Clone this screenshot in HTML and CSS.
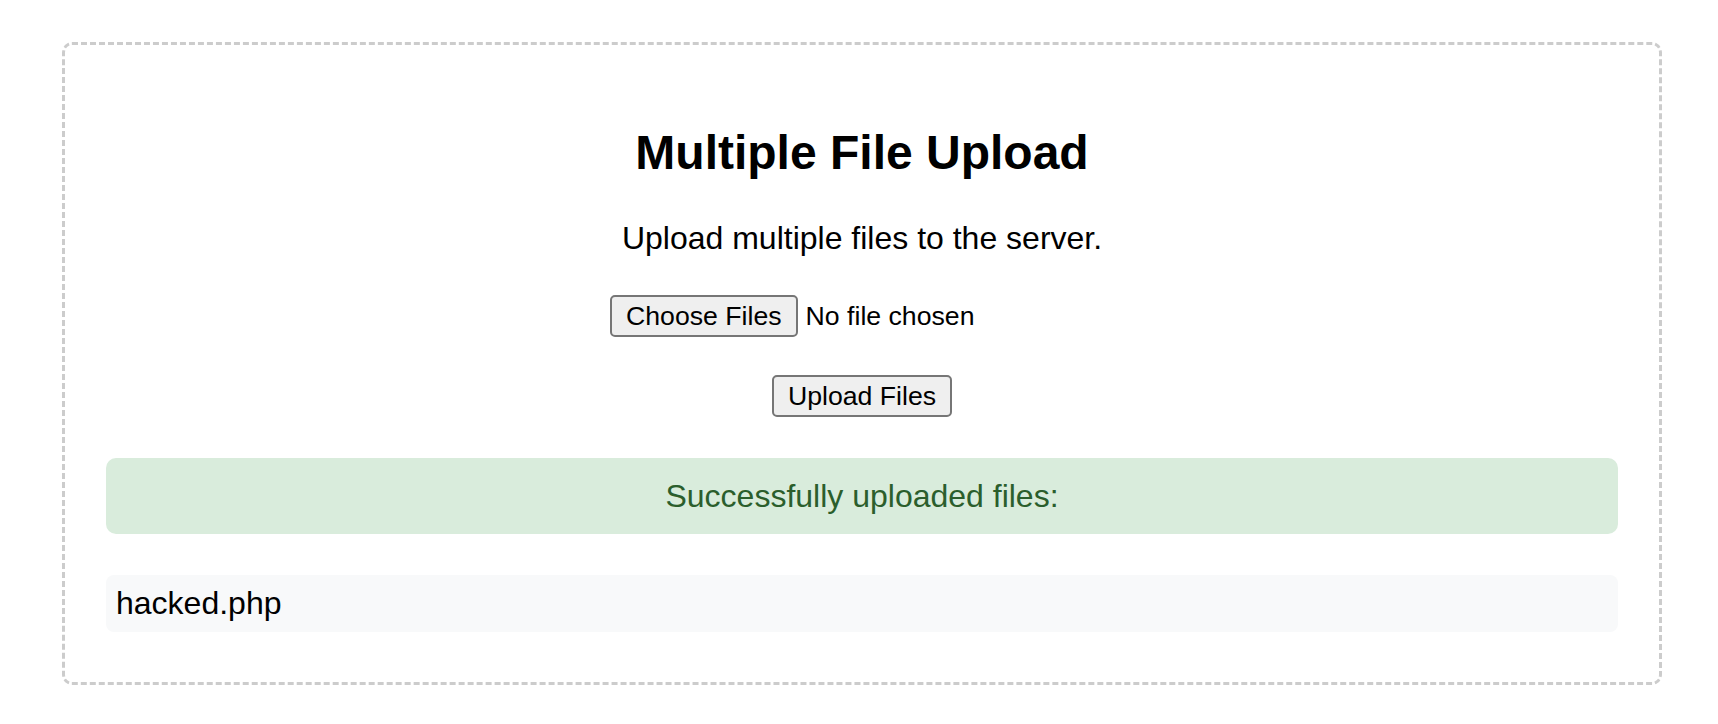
FILE: index.html
```html
<!DOCTYPE html>
<html lang="en">
<head>
<meta charset="utf-8">
<title>Multiple File Upload</title>
<link rel="stylesheet" href="styles.css">
</head>
<body>
<div class="container">
  <h2 class="title">Multiple File Upload</h2>
  <p class="lead">Upload multiple files to the server.</p>
  <form class="upload-form">
    <div class="file-row">
      <div class="file-input">
        <button type="button" class="btn">Choose Files</button>
        <span class="file-name">No file chosen</span>
      </div>
    </div>
    <div class="submit-row">
      <button type="button" class="btn">Upload Files</button>
    </div>
  </form>
  <div class="alert-success">Successfully uploaded files:</div>
  <ul class="file-list">
    <li class="file-item">hacked.php</li>
  </ul>
</div>
</body>
</html>
```

FILE: styles.css
```css
html, body {
  margin: 0;
  padding: 0;
  background: #ffffff;
}

body {
  font-family: "Liberation Sans", Arial, Helvetica, sans-serif;
  color: #000;
}

.container {
  box-sizing: border-box;
  width: 1600px;
  margin: 42px 0 0 62px;
  padding: 40px 41px 50px;
  border: 3px dashed #cccccc;
  border-radius: 10px;
  text-align: center;
}

.title {
  margin: 40px 0 0;
  font-size: 48px;
  line-height: 55px;
  font-weight: bold;
}

.lead {
  margin: 40px 0 0;
  font-size: 32px;
  line-height: 37px;
}

.upload-form {
  margin: 0;
}

.file-row {
  margin-top: 38px;
  display: flex;
  justify-content: center;
}

.file-input {
  width: 504px;
  display: flex;
  align-items: center;
  gap: 8px;
}

.file-name {
  font-size: 26.67px;
  line-height: 31px;
  white-space: nowrap;
}

.submit-row {
  margin-top: 38px;
  display: flex;
  justify-content: center;
}

.btn {
  box-sizing: border-box;
  height: 42px;
  margin: 0;
  padding: 0 14px;
  font-family: "Liberation Sans", Arial, Helvetica, sans-serif;
  font-size: 26.67px;
  line-height: 31px;
  color: #000;
  background: #efefef;
  border: 2px solid #767676;
  border-radius: 5px;
  white-space: nowrap;
}

.alert-success {
  margin-top: 41px;
  padding: 20px;
  font-size: 32px;
  line-height: 36px;
  color: #2b5e2c;
  background: #d9ecdc;
  border-radius: 10px;
}

.file-list {
  list-style: none;
  margin: 41px 0 0;
  padding: 0;
  text-align: left;
}

.file-item {
  padding: 10px;
  font-size: 32px;
  line-height: 37px;
  background: #f8f9fa;
  border-radius: 8px;
}
```
